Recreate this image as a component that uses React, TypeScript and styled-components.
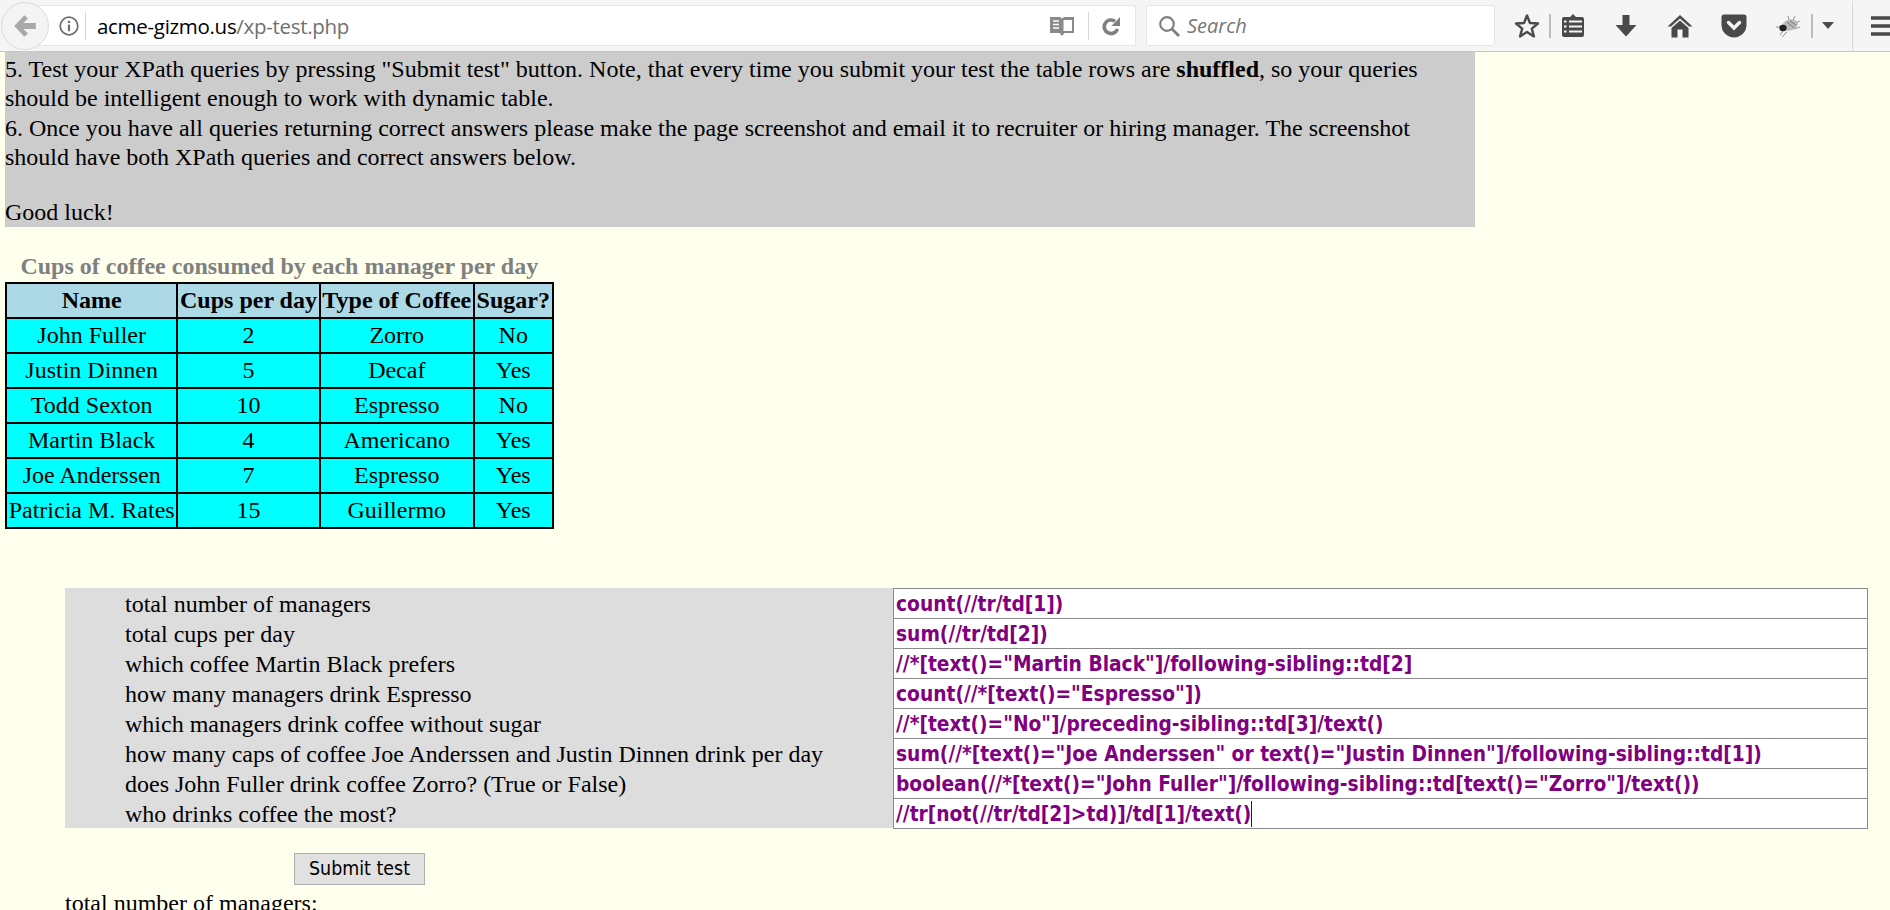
import React from 'react';
import styled, { createGlobalStyle } from 'styled-components';

const GlobalStyle = createGlobalStyle`
  html, body {
    margin: 0;
    padding: 0;
    height: 910px;
    overflow: hidden;
    background: #ffffee;
  }
`;

const Toolbar = styled.div`
  display: flex;
  align-items: center;
  height: 51px;
  overflow: hidden;
  background: #f5f5f5;
  border-bottom: 1px solid #c8c8c8;
  font-family: 'Open Sans', 'Liberation Sans', sans-serif;
`;

const BackButton = styled.div`
  flex: none;
  width: 46px;
  height: 46px;
  margin-left: 1px;
  border-radius: 50%;
  background: #f4f4f4;
  border: 1px solid #dcdcdc;
  display: flex;
  align-items: center;
  justify-content: center;
  z-index: 1;
`;

const UrlBar = styled.div`
  flex: none;
  width: 1101px;
  height: 41px;
  margin-left: -14px;
  box-sizing: border-box;
  background: #fff;
  border: 1px solid #e6e6e6;
  border-radius: 2px;
  display: flex;
  align-items: center;
  padding-left: 22px;
`;

const Divider = styled.span<{ $h?: number; $w?: number; $mx?: number; $c?: string }>`
  flex: none;
  width: ${(p) => p.$w ?? 1}px;
  height: ${(p) => p.$h ?? 28}px;
  margin: 0 ${(p) => p.$mx ?? 0}px;
  background: ${(p) => p.$c ?? '#d8d8d8'};
`;

const Url = styled.div`
  flex: 1;
  margin-left: 6px;
  font-size: 20.5px;
  letter-spacing: -0.3px;
  color: #000;
  span {
    color: #6f6f6f;
  }
`;

const SearchBox = styled.div`
  flex: none;
  width: 349px;
  height: 41px;
  margin: 0 10px;
  box-sizing: border-box;
  background: #fff;
  border: 1px solid #e6e6e6;
  border-radius: 2px;
  display: flex;
  align-items: center;
  gap: 7px;
  padding-left: 11px;
  font-size: 20px;
  font-style: italic;
  color: #777;
`;

const ToolIcon = styled.div<{ $w: number; $ml?: number; $mr?: number }>`
  flex: none;
  width: ${(p) => p.$w}px;
  margin-left: ${(p) => p.$ml ?? 0}px;
  margin-right: ${(p) => p.$mr ?? 0}px;
  display: flex;
  justify-content: center;
  align-items: center;
`;

const Page = styled.div`
  padding-left: 5px;
  font-family: 'Liberation Serif', 'Times New Roman', serif;
  font-size: 24px;
  line-height: 29.5px;
  color: #000;
`;

const Notes = styled.div`
  width: 1470px;
  height: 175px;
  padding-top: 2.5px;
  box-sizing: border-box;
  background: #cccccc;
  p {
    margin: 0 0 25px;
  }
`;

const CoffeeTable = styled.table`
  margin-top: 24px;
  border-collapse: collapse;
  border: 2px solid #000;
  line-height: 29px;
  caption {
    color: #808080;
    font-weight: bold;
    height: 31px;
    line-height: 31px;
  }
`;

const HeadCell = styled.th`
  background: #add8e6;
  border: 2px solid #000;
  padding: 2px 1.7px;
  white-space: nowrap;
  font-weight: bold;
`;

const Cell = styled.td`
  background: #00ffff;
  border: 2px solid #000;
  padding: 2px 1.7px;
  text-align: center;
  white-space: nowrap;
`;

const QueryForm = styled.div`
  margin: 59px 0 0 60px;
  width: 1803px;
  display: grid;
  grid-template-columns: 828px 975px;
`;

const QueryLabels = styled.div`
  grid-column: 1;
  background: #dddddd;
  padding-left: 60px;
`;

const QueryLabel = styled.div`
  height: 30px;
  line-height: 32px;
  white-space: nowrap;
`;

const QueryInputs = styled.div`
  grid-column: 2;
  display: flex;
  flex-direction: column;
`;

const QueryInput = styled.div`
  height: 31px;
  margin-bottom: -1px;
  box-sizing: border-box;
  background: #fff;
  border: 1px solid #8a8a8a;
  padding-left: 2px;
  color: #800080;
  font-family: 'DejaVu Sans Condensed', 'DejaVu Sans', sans-serif;
  font-stretch: condensed;
  font-weight: 700;
  font-size: 20.75px;
  line-height: 30px;
  white-space: nowrap;
  overflow: hidden;
  i {
    display: inline-block;
    width: 1px;
    height: 26px;
    background: #4a004a;
    vertical-align: -6px;
  }
`;

const SubmitButton = styled.button`
  display: block;
  margin: 25px 0 0 289px;
  width: 131px;
  height: 32px;
  padding: 0;
  background: #e1e1e1;
  border: 1px solid #adadad;
  color: #000;
  font-family: 'DejaVu Sans Condensed', 'DejaVu Sans', sans-serif;
  font-stretch: condensed;
  font-size: 19.4px;
  line-height: 28px;
`;

const Answer = styled.div`
  margin: 4px 0 0 60px;
`;

const rows = [
  ['John Fuller', '2', 'Zorro', 'No'],
  ['Justin Dinnen', '5', 'Decaf', 'Yes'],
  ['Todd Sexton', '10', 'Espresso', 'No'],
  ['Martin Black', '4', 'Americano', 'Yes'],
  ['Joe Anderssen', '7', 'Espresso', 'Yes'],
  ['Patricia M. Rates', '15', 'Guillermo', 'Yes'],
];

const queries = [
  ['total number of managers', 'count(//tr/td[1])'],
  ['total cups per day', 'sum(//tr/td[2])'],
  ['which coffee Martin Black prefers', '//*[text()="Martin Black"]/following-sibling::td[2]'],
  ['how many managers drink Espresso', 'count(//*[text()="Espresso"])'],
  ['which managers drink coffee without sugar', '//*[text()="No"]/preceding-sibling::td[3]/text()'],
  ['how many caps of coffee Joe Anderssen and Justin Dinnen drink per day', 'sum(//*[text()="Joe Anderssen" or text()="Justin Dinnen"]/following-sibling::td[1])'],
  ['does John Fuller drink coffee Zorro? (True or False)', 'boolean(//*[text()="John Fuller"]/following-sibling::td[text()="Zorro"]/text())'],
  ['who drinks coffee the most?', '//tr[not(//tr/td[2]>td)]/td[1]/text()'],
];

const Bug = () => (
  <svg width="26" height="24" viewBox="0 0 26 24">
    <g stroke="#777" strokeWidth="0.8" fill="none">
      <path d="M6 13 L1 13 M8 17 L5 21 M12 18 L7 23 M19 15 L25 13 M20 9 L25 7 M14 6 L13 2 M18 6 L20 2" />
    </g>
    <ellipse cx="15" cy="11" rx="8" ry="5.5" fill="#bbb" transform="rotate(-15 15 11)" />
    <ellipse cx="8" cy="14" rx="3.6" ry="3.2" fill="#222" />
    <path d="M12 8 L19 14 M15 7 L21 11" stroke="#666" strokeWidth="0.8" />
  </svg>
);

export default function App() {
  return (
    <>
      <GlobalStyle />
      <Toolbar>
        <BackButton>
          <svg width="24" height="24" viewBox="0 0 20 20">
            <path d="M9.5 1 L1 10 L9.5 19 L12.5 16 L8.5 12.5 H19 V7.5 H8.5 L12.5 4 Z" fill="#a8a8a8" />
          </svg>
        </BackButton>
        <UrlBar>
          <svg width="22" height="22" viewBox="0 0 22 22">
            <circle cx="11" cy="11" r="8.8" fill="none" stroke="#707070" strokeWidth="1.8" />
            <rect x="9.9" y="9.6" width="2.2" height="6.6" fill="#707070" />
            <rect x="9.9" y="5.8" width="2.2" height="2.3" fill="#707070" />
          </svg>
          <Divider $mx={5} />
          <Url>
            acme-gizmo.us<span>/xp-test.php</span>
          </Url>
          <svg width="26" height="22" viewBox="0 0 26 22">
            <path d="M1 2 H11 L13 3.5 L15 2 H25 V18 H15.5 L13 21 L10.5 18 H1 Z" fill="#8a8a8a" />
            <path d="M14.5 5 H23 V16 H14.5 Z" fill="#fff" />
            <path d="M4 6 H10 M4 9.5 H10 M4 13 H10" stroke="#fff" strokeWidth="1.6" />
          </svg>
          <Divider $mx={13} />
          <svg width="20" height="20" viewBox="0 0 20 20" style={{ marginRight: 13 }}>
            <path d="M15.5 13 A6.8 6.8 0 1 1 13 5.2" fill="none" stroke="#808080" strokeWidth="3.6" />
            <path d="M18 1 V10 H9.5 Z" fill="#808080" />
          </svg>
        </UrlBar>
        <SearchBox>
          <svg width="22" height="22" viewBox="0 0 22 22">
            <circle cx="9" cy="9" r="6.8" fill="none" stroke="#808080" strokeWidth="2.2" />
            <path d="M14 14 L21 21" stroke="#808080" strokeWidth="2.8" />
          </svg>
          Search
        </SearchBox>
        <ToolIcon $w={43}>
          <svg width="26" height="26" viewBox="0 0 26 26">
            <path d="M13 2.5 L16 10 L24 10.5 L17.8 15.6 L19.9 23.4 L13 19 L6.1 23.4 L8.2 15.6 L2 10.5 L10 10 Z" fill="none" stroke="#4a4a4a" strokeWidth="2.4" strokeLinejoin="round" />
          </svg>
        </ToolIcon>
        <Divider $h={24} $w={2} $mx={1} $c="#bcbcbc" />
        <ToolIcon $w={42}>
          <svg width="24" height="26" viewBox="0 0 24 26">
            <path d="M3 4 H9 L12 1 L15 4 H21 A2 2 0 0 1 23 6 V22 A2 2 0 0 1 21 24 H3 A2 2 0 0 1 1 22 V6 A2 2 0 0 1 3 4 Z" fill="#4a4a4a" />
            <path d="M3 8.5 H5.5 M8 8.5 H21 M3 13.5 H5.5 M8 13.5 H21 M3 18.5 H5.5 M8 18.5 H21" stroke="#f5f5f5" strokeWidth="2" />
          </svg>
        </ToolIcon>
        <ToolIcon $w={54} $ml={5}>
          <svg width="22" height="22" viewBox="0 0 22 22">
            <path d="M7.5 0 H14.5 V10 H21.5 L11 21.5 L0.5 10 H7.5 Z" fill="#4a4a4a" />
          </svg>
        </ToolIcon>
        <ToolIcon $w={54}>
          <svg width="26" height="24" viewBox="0 0 26 24">
            <path d="M13 1 L25.5 12.5 H22 L13 4.5 L4 12.5 H0.5 Z" fill="#4a4a4a" />
            <path d="M13 6.5 L21.5 14 V23.5 H15.5 V15.5 H10.5 V23.5 H4.5 V14 Z" fill="#4a4a4a" />
          </svg>
        </ToolIcon>
        <ToolIcon $w={54}>
          <svg width="26" height="24" viewBox="0 0 26 24">
            <path d="M3 0.5 H23 A2.5 2.5 0 0 1 25.5 3 V11 A12.5 12.5 0 0 1 0.5 11 V3 A2.5 2.5 0 0 1 3 0.5 Z" fill="#4a4a4a" />
            <path d="M7.5 8.5 L13 14 L18.5 8.5" fill="none" stroke="#f5f5f5" strokeWidth="3.4" strokeLinecap="round" />
          </svg>
        </ToolIcon>
        <ToolIcon $w={54} $mr={-4}>
          <Bug />
        </ToolIcon>
        <Divider $h={24} $w={2} $c="#bcbcbc" />
        <ToolIcon $w={30}>
          <svg width="12" height="7" viewBox="0 0 12 7">
            <path d="M0 0 H12 L6 7 Z" fill="#4a4a4a" />
          </svg>
        </ToolIcon>
        <Divider $h={50} $mx={9} />
        <ToolIcon $w={20} $ml={9}>
          <svg width="20" height="20" viewBox="0 0 20 20">
            <path d="M0 2 H20 M0 10 H20 M0 18 H20" stroke="#4a4a4a" strokeWidth="3.4" />
          </svg>
        </ToolIcon>
      </Toolbar>
      <Page>
        <Notes>
          <p>
            5. Test your XPath queries by pressing "Submit test" button. Note, that every time you submit your test the table rows are <b>shuffled</b>, so your queries should be intelligent enough to work with dynamic table.
            <br />
            6. Once you have all queries returning correct answers please make the page screenshot and email it to recruiter or hiring manager. The screenshot should have both XPath queries and correct answers below.
          </p>
          Good luck!
        </Notes>
        <CoffeeTable>
          <caption>Cups of coffee consumed by each manager per day</caption>
          <thead>
            <tr>
              <HeadCell>Name</HeadCell>
              <HeadCell>Cups per day</HeadCell>
              <HeadCell>Type of Coffee</HeadCell>
              <HeadCell>Sugar?</HeadCell>
            </tr>
          </thead>
          <tbody>
            {rows.map((r) => (
              <tr key={r[0]}>
                {r.map((c, i) => (
                  <Cell key={i}>{c}</Cell>
                ))}
              </tr>
            ))}
          </tbody>
        </CoffeeTable>
        <QueryForm>
          <QueryLabels>
            {queries.map((q) => (
              <QueryLabel key={q[0]}>{q[0]}</QueryLabel>
            ))}
          </QueryLabels>
          <QueryInputs>
            {queries.map((q, i) => (
              <QueryInput key={q[0]}>
                {q[1]}
                {i === queries.length - 1 && <i />}
              </QueryInput>
            ))}
          </QueryInputs>
        </QueryForm>
        <SubmitButton>Submit test</SubmitButton>
        <Answer>total number of managers:</Answer>
      </Page>
    </>
  );
}
